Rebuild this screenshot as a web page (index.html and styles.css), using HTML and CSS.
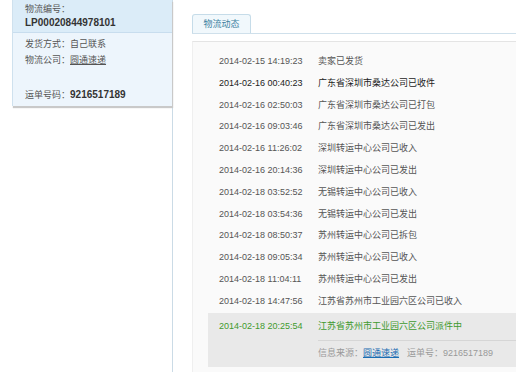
FILE: index.html
```html
<!DOCTYPE html>
<html lang="zh-CN">
<head>
  <meta charset="UTF-8">
  <title>物流动态</title>
  <link rel="stylesheet" href="styles.css">
</head>
<body>
  <div class="page">
    <div class="sidebar">
      <div class="panel">
        <div class="panel-head">
          <div>物流编号：</div>
          <div class="strong">LP00020844978101</div>
        </div>
        <div class="panel-body">
          <div>发货方式：自己联系</div>
          <div>物流公司：<a href="#" class="plain-link">圆通速递</a></div>
          <div class="waybill">运单号码：<span class="strong">9216517189</span></div>
        </div>
      </div>
    </div>

    <div class="main">
      <div class="tabs">
        <div class="tab">物流动态</div>
      </div>
      <div class="box">
        <ul class="track">
          <li><span class="time">2014-02-15 14:19:23</span><span class="desc">卖家已发货</span></li>
          <li class="dark"><span class="time">2014-02-16 00:40:23</span><span class="desc">广东省深圳市桑达公司已收件</span></li>
          <li><span class="time">2014-02-16 02:50:03</span><span class="desc">广东省深圳市桑达公司已打包</span></li>
          <li><span class="time">2014-02-16 09:03:46</span><span class="desc">广东省深圳市桑达公司已发出</span></li>
          <li><span class="time">2014-02-16 11:26:02</span><span class="desc">深圳转运中心公司已收入</span></li>
          <li><span class="time">2014-02-16 20:14:36</span><span class="desc">深圳转运中心公司已发出</span></li>
          <li><span class="time">2014-02-18 03:52:52</span><span class="desc">无锡转运中心公司已收入</span></li>
          <li><span class="time">2014-02-18 03:54:36</span><span class="desc">无锡转运中心公司已发出</span></li>
          <li><span class="time">2014-02-18 08:50:37</span><span class="desc">苏州转运中心公司已拆包</span></li>
          <li><span class="time">2014-02-18 09:05:34</span><span class="desc">苏州转运中心公司已收入</span></li>
          <li><span class="time">2014-02-18 11:04:11</span><span class="desc">苏州转运中心公司已发出</span></li>
          <li><span class="time">2014-02-18 14:47:56</span><span class="desc">江苏省苏州市工业园六区公司已收入</span></li>
        </ul>
        <div class="latest">
          <div class="latest-row"><span class="time">2014-02-18 20:25:54</span><span class="desc">江苏省苏州市工业园六区公司派件中</span></div>
          <div class="source">信息来源：<a href="#" class="link">圆通速递</a><span class="source-no">运单号：9216517189</span></div>
        </div>
      </div>
    </div>
  </div>
</body>
</html>
```

FILE: styles.css
```css
body {
  margin: 0;
  font-family: "Liberation Sans", "Noto Sans CJK SC", sans-serif;
  font-size: 9px;
  color: #555;
  background: #fff;
}

.page {
  display: flex;
  min-height: 372px;
}

.sidebar {
  width: 160px;
  padding-left: 12px;
  border-right: 1px solid #cbdbe6;
  flex-shrink: 0;
}

.panel {
  border-left: 1px solid #cfe1ee;
  box-shadow: 1px 2px 1px #c9c9c9;
}

.panel-head {
  background: #dbecf8;
  border-bottom: 1px solid #c8ddee;
  padding: 2px 12px 2px;
  line-height: 14px;
}

.panel-body {
  background: #edf5fc;
  padding: 3px 12px 3px;
  line-height: 16px;
}

.waybill {
  margin-top: 19px;
}

.strong {
  font-weight: bold;
  font-size: 10px;
  color: #333;
}

.plain-link {
  color: #555;
  text-decoration: underline;
}

.main {
  flex: 1;
  padding: 14px 0 0 19px;
  display: flex;
  flex-direction: column;
}

.tabs {
  display: flex;
  border-bottom: 1px solid #cfe0eb;
}

.tab {
  width: 57px;
  height: 18px;
  line-height: 18px;
  text-align: center;
  color: #3b7f9f;
  background: #f1f8fc;
  border: 1px solid #c6dce9;
  border-bottom: none;
  border-radius: 3px 3px 0 0;
}

.box {
  flex: 1;
  margin-top: 7px;
  background: #fafafa;
  border-top: 1px solid #e4e4e4;
  border-left: 1px solid #efefef;
  padding: 9px 0 0 15px;
}

.track {
  list-style: none;
  margin: 0;
  padding: 0;
}

.track li,
.latest-row {
  display: flex;
  height: 21.8px;
  line-height: 21.8px;
  padding-left: 11px;
  white-space: nowrap;
}

.time {
  width: 99px;
  flex-shrink: 0;
}

.desc {
  color: #555;
}

.track li.dark,
.track li.dark .desc {
  color: #222;
}

.latest {
  background: #e9e9e9;
  padding: 2px 0 2px;
}

.latest-row {
  height: 22px;
  line-height: 22px;
  color: #3f9a2e;
}

.latest-row .desc {
  color: #3f9a2e;
}

.source {
  margin: 3px 0 0 110px;
  border-top: 1px solid #d6d6d6;
  line-height: 24px;
  color: #999;
  white-space: nowrap;
}

.link {
  color: #1b6db3;
  text-decoration: underline;
}

.source-no {
  margin-left: 8px;
}
```
